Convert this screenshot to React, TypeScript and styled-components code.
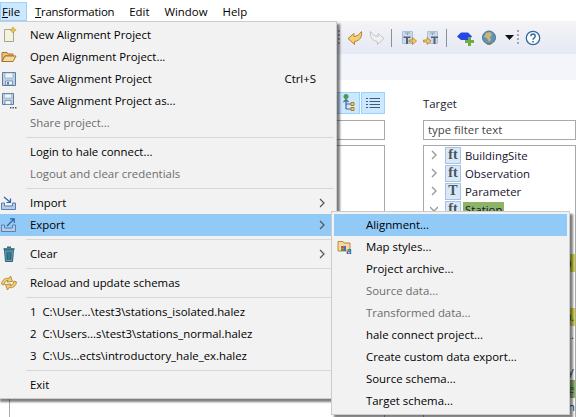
import type { ReactNode } from "react";
import styled, { createGlobalStyle } from "styled-components";

const GlobalStyle = createGlobalStyle`
  html, body {
    margin: 0;
    height: 100%;
    overflow: hidden;
    background: #ffffff;
  }
`;

const Page = styled.div`
  position: relative;
  width: 576px;
  height: 417px;
  overflow: hidden;
  background: #ffffff;
  font-family: "Open Sans", "Noto Sans", sans-serif;
  font-size: 11.4px;
  color: #000000;
`;

const MenuBar = styled.nav`
  display: flex;
  height: 21px;
  padding-top: 2px;
  box-sizing: border-box;
`;

const MenuTitle = styled.div<{ $open?: boolean; $tight?: boolean }>`
  display: flex;
  align-items: center;
  padding: ${(p) => (p.$open ? "0 6px 0 1px" : "0 7px 0 8px")};
  border-style: solid;
  border-color: #99d1ff;
  border-width: ${(p) => (p.$open ? "1px" : "0")};
  background: ${(p) => (p.$open ? "#cce8ff" : "transparent")};
  letter-spacing: ${(p) => (p.$tight ? "-0.25px" : "0")};

  u {
    text-underline-offset: 1px;
  }
`;

const Toolbar = styled.div`
  display: flex;
  align-items: center;
  height: 33px;
  padding-left: 338px;
  box-sizing: border-box;
  background: linear-gradient(#f4f4f6, #e5e9f5);
`;

const Grip = styled.span<{ $gap?: number }>`
  width: 2px;
  height: 16px;
  margin-left: ${(p) => p.$gap ?? 0}px;
  background: repeating-linear-gradient(#a8a8a8 0 2px, transparent 2px 4px);
`;

const ToolSep = styled.span<{ $gap: number }>`
  width: 1px;
  height: 18px;
  margin-left: ${(p) => p.$gap}px;
  background: #8c8f99;
`;

const ToolIcon = styled.svg<{ $gap: number }>`
  flex: none;
  margin-left: ${(p) => p.$gap}px;
`;

const Band = styled.div`
  height: 26px;
  background: #f3f5fb;
`;

const Content = styled.main`
  display: grid;
  grid-template-columns: 376px 153px;
  column-gap: 38px;
  padding: 12px 0 0 9px;
`;

const Column = styled.section`
  display: flex;
  flex-direction: column;
`;

const ColumnHead = styled.div`
  display: flex;
  align-items: center;
  justify-content: flex-end;
  height: 22px;
`;

const HeadLabel = styled.div`
  margin-right: auto;
  color: #1a1a33;
`;

const Toggle = styled.div`
  display: flex;
  align-items: center;
  justify-content: center;
  width: 22px;
  height: 20px;
  margin-left: 1px;
  border: 1px solid #99d1ff;
  background: #cce8ff;
`;

const FilterInput = styled.div`
  display: flex;
  align-items: center;
  height: 20px;
  margin-top: 6px;
  padding: 0 0 2px 4px;
  box-sizing: border-box;
  border: 1px solid #a9a9a9;
  color: #444444;
`;

const TreeBox = styled.div`
  display: flex;
  flex-direction: column;
  height: 280px;
  margin-top: 5px;
  box-sizing: border-box;
  border: 1px solid #a9a9a9;
  color: #14142b;
`;

const TreeRow = styled.div`
  display: flex;
  align-items: center;
  flex: none;
  height: 18px;
`;

const Twist = styled.svg`
  flex: none;
  margin: 0 7px 0 6px;
`;

const TypeIcon = styled.span`
  display: flex;
  align-items: center;
  justify-content: center;
  flex: none;
  width: 14px;
  height: 15px;
  margin-right: 2px;
  border: 1px solid #a5c3e3;
  background: #d9e7f6;
  color: #46535f;
  font-family: "Liberation Serif", serif;
  font-size: 14px;
  font-weight: 700;
  line-height: 1;
`;

const NodeLabel = styled.span<{ $match?: boolean }>`
  padding: 0 2px;
  background: ${(p) => (p.$match ? "#8db369" : "transparent")};
`;

const Peek = styled.span<{ $tone?: "yellow" | "green" }>`
  margin-left: auto;
  width: 7px;
  height: 18px;
  line-height: 17px;
  white-space: nowrap;
  color: ${(p) => (p.$tone ? "#2c5058" : "#2f3f72")};
  background: ${(p) =>
    p.$tone === "yellow" ? "#d8d84a" : p.$tone === "green" ? "#8db369" : "transparent"};
`;

const Menu = styled.div<{ $left: number; $top: number; $width: number }>`
  position: absolute;
  left: ${(p) => p.$left}px;
  top: ${(p) => p.$top}px;
  width: ${(p) => p.$width}px;
  box-sizing: border-box;
  padding: 2px;
  border: 1px solid #cccccc;
  background: #f2f2f2;
  box-shadow: 3px 3px 2px rgba(0, 0, 0, 0.5);
`;

const Item = styled.div<{ $active?: boolean; $disabled?: boolean }>`
  display: flex;
  align-items: center;
  height: 22px;
  background: ${(p) => (p.$active ? "#91c9f7" : "transparent")};
  color: ${(p) => (p.$disabled ? "#6d6d6d" : "#000000")};
`;

const ItemText = styled.span`
  position: relative;
  top: -1px;
`;

const IconSlot = styled.span`
  display: flex;
  align-items: center;
  justify-content: center;
  flex: none;
  width: 18px;
  height: 18px;
  margin-right: 12px;
`;

const SubSlot = styled.span`
  display: flex;
  align-items: center;
  flex: none;
  width: 32px;
  height: 18px;
  padding-left: 3px;
  box-sizing: border-box;
`;

const Shortcut = styled(ItemText)`
  margin-left: auto;
  margin-right: 18px;
`;

const Arrow = styled.svg`
  flex: none;
  margin-left: auto;
  margin-right: 9px;
`;

const Separator = styled.div`
  height: 1px;
  margin: 3px 0 3px 26px;
  background: #d7d7d7;
`;

const FileNew = () => (
  <svg width="16" height="16" viewBox="0 0 16 16">
    <path d="M3.5 2.5h7l2 2v10h-9z" fill="#f4f1df" stroke="#a9a58e" />
    <path d="M12 0l1.200 2 2 1-2 1.200L12 6l-1.100-1.800L9 3l1.900-1z" fill="#f1c63c" stroke="#a9852a" strokeWidth=".5" />
  </svg>
);

const FileOpen = () => (
  <svg width="16" height="16" viewBox="0 0 16 16">
    <path d="M1 3.500h5l1 1.500h5v2H4l-3 5.500z" fill="#efc079" stroke="#a8742d" />
    <path d="M1 12.500l3-5.500h11l-3 5.500z" fill="#f5d9a0" stroke="#a8742d" />
  </svg>
);

const FileSave = () => (
  <svg width="16" height="16" viewBox="0 0 16 16">
    <path d="M1.500 1.500h13v13h-13z" fill="#bcd0e6" stroke="#5d7d9f" />
    <path d="M4 2h8v5H4z" fill="#f0f4f8" stroke="#8ca3bb" strokeWidth=".6" />
    <path d="M4.500 10h7v4h-7z" fill="#f0f4f8" stroke="#5d7d9f" strokeWidth=".7" />
    <path d="M6 11h2v2.500H6z" fill="#5d7d9f" />
  </svg>
);

const FileSaveAs = () => (
  <svg width="16" height="16" viewBox="0 0 16 16">
    <path d="M1.500 0.500h11v11h-11z" fill="#bcd0e6" stroke="#5d7d9f" />
    <path d="M3.500 1h7v4h-7z" fill="#f0f4f8" stroke="#8ca3bb" strokeWidth=".6" />
    <path d="M4 7.500h6v4H4z" fill="#f0f4f8" stroke="#5d7d9f" strokeWidth=".7" />
    <path d="M9 14h1.500v1.500H9zM11.500 14H13v1.500h-1.500zM14 14h1.500v1.500H14z" fill="#44586d" />
  </svg>
);

const TrayIcon = ({ direction }: { direction: "in" | "out" }) => (
  <svg width="16" height="16" viewBox="0 0 16 16">
    <path d="M.5 8v6.500h14V8h-3v3h-8V8z" fill="#b8cde6" stroke="#5a7fb0" />
    {direction === "in" ? (
      <path d="M3 2l6 5M9.500 3.500v4h-4" fill="none" stroke="#2a63a6" strokeWidth="1.200" />
    ) : (
      <path d="M6 9l7-7M9 1.800h4.200V6" fill="none" stroke="#2a63a6" strokeWidth="1.200" />
    )}
  </svg>
);

const Trash = () => (
  <svg width="16" height="16" viewBox="0 0 16 16">
    <path d="M2.500 2h11v2h-11z" fill="#4f7f8f" />
    <path d="M6 .5h4V2H6z" fill="#3f6a78" />
    <path d="M3.500 4h9l-1 11.500h-7z" fill="#62a9c4" stroke="#2f6278" />
    <path d="M6 5.500l.3 8.500M8 5.500V14M10 5.500L9.700 14" stroke="#23566a" strokeWidth="1.200" />
  </svg>
);

const Reload = () => (
  <svg width="16" height="16" viewBox="0 0 16 16">
    <path d="M.5 9C1 5 4.500 2.500 8 3.500L9.500 1l2 5.500-5.500.5 1-1.700C5 5.200 3.500 7 3 10z" fill="#f3ce72" stroke="#a8781f" strokeWidth=".8" />
    <path d="M15.500 7c-.5 4-4 6.500-7.500 5.500L6.500 15l-2-5.500L10 9 9 10.700c2 .1 3.500-1.700 4-4.700z" fill="#f3ce72" stroke="#a8781f" strokeWidth=".8" />
  </svg>
);

const StyleFolder = () => (
  <svg width="16" height="16" viewBox="0 0 16 16">
    <path d="M1 2.500h5l1 1.500h6v8H1z" fill="#f3d9a4" stroke="#b98a3d" />
    <path d="M4 7h3v2.500H4z" fill="#d8513d" />
    <path d="M4 9.500h3V12H4z" fill="#4f9a4c" />
    <path d="M7 7h2v5H7z" fill="#3f73bd" />
    <text x="9.500" y="15" fontFamily="Liberation Sans, sans-serif" fontSize="9" fontStyle="italic" fontWeight="700" fill="#2a5ca8">
      a
    </text>
  </svg>
);

const ChevronGlyph = () => (
  <Arrow width="6" height="10" viewBox="0 0 6 10">
    <path d="M1 1l4 4-4 4" fill="none" stroke="#555555" strokeWidth="1.200" />
  </Arrow>
);

const MenuEntry = ({
  icon,
  active,
  disabled,
  submenu,
  children,
}: {
  icon?: ReactNode;
  active?: boolean;
  disabled?: boolean;
  submenu?: boolean;
  children: ReactNode;
}) => (
  <Item $active={active} $disabled={disabled}>
    <IconSlot>{icon}</IconSlot>
    <ItemText>{children}</ItemText>
    {submenu ? <ChevronGlyph /> : null}
  </Item>
);

const topItems = [
  { label: "New Alignment Project", icon: <FileNew /> },
  { label: "Open Alignment Project...", icon: <FileOpen /> },
  { label: "Save Alignment Project", icon: <FileSave />, shortcut: "Ctrl+S" },
  { label: "Save Alignment Project as...", icon: <FileSaveAs /> },
  { label: "Share project...", disabled: true },
];

const exportItems = [
  { label: "Alignment...", active: true },
  { label: "Map styles...", icon: <StyleFolder /> },
  { label: "Project archive..." },
  { label: "Source data...", disabled: true },
  { label: "Transformed data...", disabled: true },
  { label: "hale connect project..." },
  { label: "Create custom data export..." },
  { label: "Source schema..." },
  { label: "Target schema..." },
];

const peeks: Record<number, { text: string; tone?: "yellow" | "green" }> = {
  2: { text: ")", tone: "yellow" },
  5: { text: ").", tone: "yellow" },
  6: { text: ".." },
  8: { text: "y" },
  9: { text: "e", tone: "green" },
  10: { text: "n" },
};

const treeNodes = [
  { label: "BuildingSite", type: "ft" },
  { label: "Observation", type: "ft" },
  { label: "Parameter", type: "T" },
  { label: "Station", type: "ft", open: true, match: true },
];

export default function App() {
  return (
    <Page>
      <GlobalStyle />
      <MenuBar>
        <MenuTitle $open>
          <span>
            <u>F</u>ile
          </span>
        </MenuTitle>
        <MenuTitle $tight>
          <span>
            <u>T</u>ransformation
          </span>
        </MenuTitle>
        <MenuTitle>Edit</MenuTitle>
        <MenuTitle>Window</MenuTitle>
        <MenuTitle>Help</MenuTitle>
      </MenuBar>

      <Toolbar>
        <Grip />
        <ToolIcon $gap={7} width="16" height="16" viewBox="0 0 16 16">
          <path d="M1 8.500L7 3.500v3c3 0 5-1.500 7.500-5 1 4.500-1.500 9.500-7 10v3z" fill="#f3cf78" stroke="#b78326" />
        </ToolIcon>
        <ToolIcon $gap={6} width="16" height="16" viewBox="0 0 16 16">
          <path d="M15 8.500L9 3.500v3c-3 0-5-1.500-7.500-5-1 4.500 1.500 9.500 7 10v3z" fill="#f0f0f0" stroke="#c4c4c4" />
        </ToolIcon>
        <ToolSep $gap={6} />
        <ToolIcon $gap={9} width="16" height="16" viewBox="0 0 16 16">
          <path d="M1.500 1.500h10v12h-10z" fill="#c9daee" stroke="#a9c0da" />
          <path d="M4 2.500h5v1H7v1.500H6V3.500H4z" fill="#8f9bab" />
          <path d="M2.500 6.500h7v1.500h-2.500v6h-2V8H2.500z" fill="#55626f" />
          <path d="M8 10h3.500V7.500l4 3.500-4 3.500V12H8z" fill="#f2c763" stroke="#a97a20" strokeWidth=".7" />
        </ToolIcon>
        <ToolIcon $gap={6} width="16" height="16" viewBox="0 0 16 16">
          <path d="M4.500 1.500h10v12h-10z" fill="#c9daee" stroke="#a9c0da" />
          <path d="M7 2.500h5v1h-2v1.500H9V3.500H7z" fill="#8f9bab" />
          <path d="M8 6.500h7v1.500h-2.500v6h-2V8H8z" fill="#55626f" />
          <path d="M.5 10H4V7.500L8 11l-4 3.500V12H.5z" fill="#f2c763" stroke="#a97a20" strokeWidth=".7" />
        </ToolIcon>
        <ToolSep $gap={7} />
        <ToolIcon $gap={9} width="20" height="16" viewBox="0 0 20 16">
          <path d="M1 6.500L5 2.500h7l4 4-3 3.500H5z" fill="#2346e6" />
          <path d="M12 7h3v3h3v3h-3v3h-3v-3H9v-3h3z" fill="#70ab45" />
        </ToolIcon>
        <ToolIcon $gap={5} width="16" height="16" viewBox="0 0 16 16">
          <circle cx="8" cy="7.500" r="6.500" fill="#5f93b8" stroke="#4c6f8c" />
          <path d="M5 3l4-1 2 3-2 2 1 3-2 2-2-4-3-1z" fill="#cbb67a" />
          <path d="M6 14h4" stroke="#8a7a3a" strokeWidth="1.500" />
        </ToolIcon>
        <ToolIcon $gap={8} width="9" height="5" viewBox="0 0 9 5">
          <path d="M0 0h9L4.500 5z" fill="#111111" />
        </ToolIcon>
        <Grip $gap={3} />
        <ToolIcon $gap={6} width="16" height="16" viewBox="0 0 16 16">
          <circle cx="8" cy="8" r="6.700" fill="#ffffff" stroke="#2f6a9f" strokeWidth="1.300" />
          <path d="M5.800 6.200c0-3 4.400-3 4.400 0 0 1.800-2.200 1.700-2.200 3.500" fill="none" stroke="#2f6a9f" strokeWidth="1.400" />
          <path d="M7.200 11h1.600v1.500H7.200z" fill="#2f6a9f" />
        </ToolIcon>
      </Toolbar>
      <Band />

      <Content>
        <Column>
          <ColumnHead>
            <Toggle>
              <svg width="14" height="18" viewBox="0 0 14 18">
                <circle cx="5" cy="2.500" r="2.500" fill="#4a9a55" />
                <path d="M5 6v9M5 10h5M5 15h5M2.500 8L5 5.500 7.500 8" fill="none" stroke="#51618f" strokeWidth="1.200" />
                <path d="M10 8.500h3v3h-3zM10 13.500h3v3h-3z" fill="#e6c98f" stroke="#a87f1e" />
              </svg>
            </Toggle>
            <Toggle>
              <svg width="14" height="12" viewBox="0 0 14 12">
                <path d="M0 1.500h2M3.500 1.500H14M0 4.500h2M3.500 4.500H14M0 7.500h2M3.500 7.500H14M0 10.500h2M3.500 10.500H14" stroke="#3e5a7c" />
              </svg>
            </Toggle>
          </ColumnHead>
          <FilterInput />
          <TreeBox />
        </Column>
        <Column>
          <ColumnHead>
            <HeadLabel>Target</HeadLabel>
          </ColumnHead>
          <FilterInput>type filter text</FilterInput>
          <TreeBox>
            {treeNodes.map((node) => (
              <TreeRow key={node.label}>
                <Twist width="8" height="10" viewBox="0 0 8 10">
                  <path
                    d={node.open ? "M0 3l4 4 4-4" : "M2 1l4 4-4 4"}
                    fill="none"
                    stroke="#9a9a9a"
                    strokeWidth="1.400"
                  />
                </Twist>
                <TypeIcon>{node.type}</TypeIcon>
                <NodeLabel $match={node.match}>{node.label}</NodeLabel>
              </TreeRow>
            ))}
            {Array.from({ length: 11 }, (_, i) => (
              <TreeRow key={i}>
                {peeks[i] ? <Peek $tone={peeks[i].tone}>{peeks[i].text}</Peek> : null}
              </TreeRow>
            ))}
          </TreeBox>
        </Column>
      </Content>

      <Menu $left={-3} $top={21} $width={340}>
        {topItems.map((item) => (
          <Item key={item.label} $disabled={item.disabled}>
            <IconSlot>{item.icon}</IconSlot>
            <ItemText>{item.label}</ItemText>
            {item.shortcut ? <Shortcut>{item.shortcut}</Shortcut> : null}
          </Item>
        ))}
        <Separator />
        <MenuEntry>Login to hale connect...</MenuEntry>
        <MenuEntry disabled>Logout and clear credentials</MenuEntry>
        <Separator />
        <MenuEntry submenu icon={<TrayIcon direction="in" />}>
          Import
        </MenuEntry>
        <MenuEntry submenu active icon={<TrayIcon direction="out" />}>
          Export
        </MenuEntry>
        <Separator />
        <MenuEntry submenu icon={<Trash />}>
          Clear
        </MenuEntry>
        <Separator />
        <MenuEntry icon={<Reload />}>Reload and update schemas</MenuEntry>
        <Separator />
        <MenuEntry>1&nbsp;&nbsp;C:\User...\test3\stations_isolated.halez</MenuEntry>
        <MenuEntry>2&nbsp;&nbsp;C:\Users...s\test3\stations_normal.halez</MenuEntry>
        <MenuEntry>3&nbsp;&nbsp;C:\Us...ects\introductory_hale_ex.halez</MenuEntry>
        <Separator />
        <MenuEntry>Exit</MenuEntry>
      </Menu>

      <Menu $left={331} $top={211} $width={239}>
        {exportItems.map((item) => (
          <Item key={item.label} $active={item.active} $disabled={item.disabled}>
            <SubSlot>{item.icon}</SubSlot>
            <ItemText>{item.label}</ItemText>
          </Item>
        ))}
      </Menu>
    </Page>
  );
}
